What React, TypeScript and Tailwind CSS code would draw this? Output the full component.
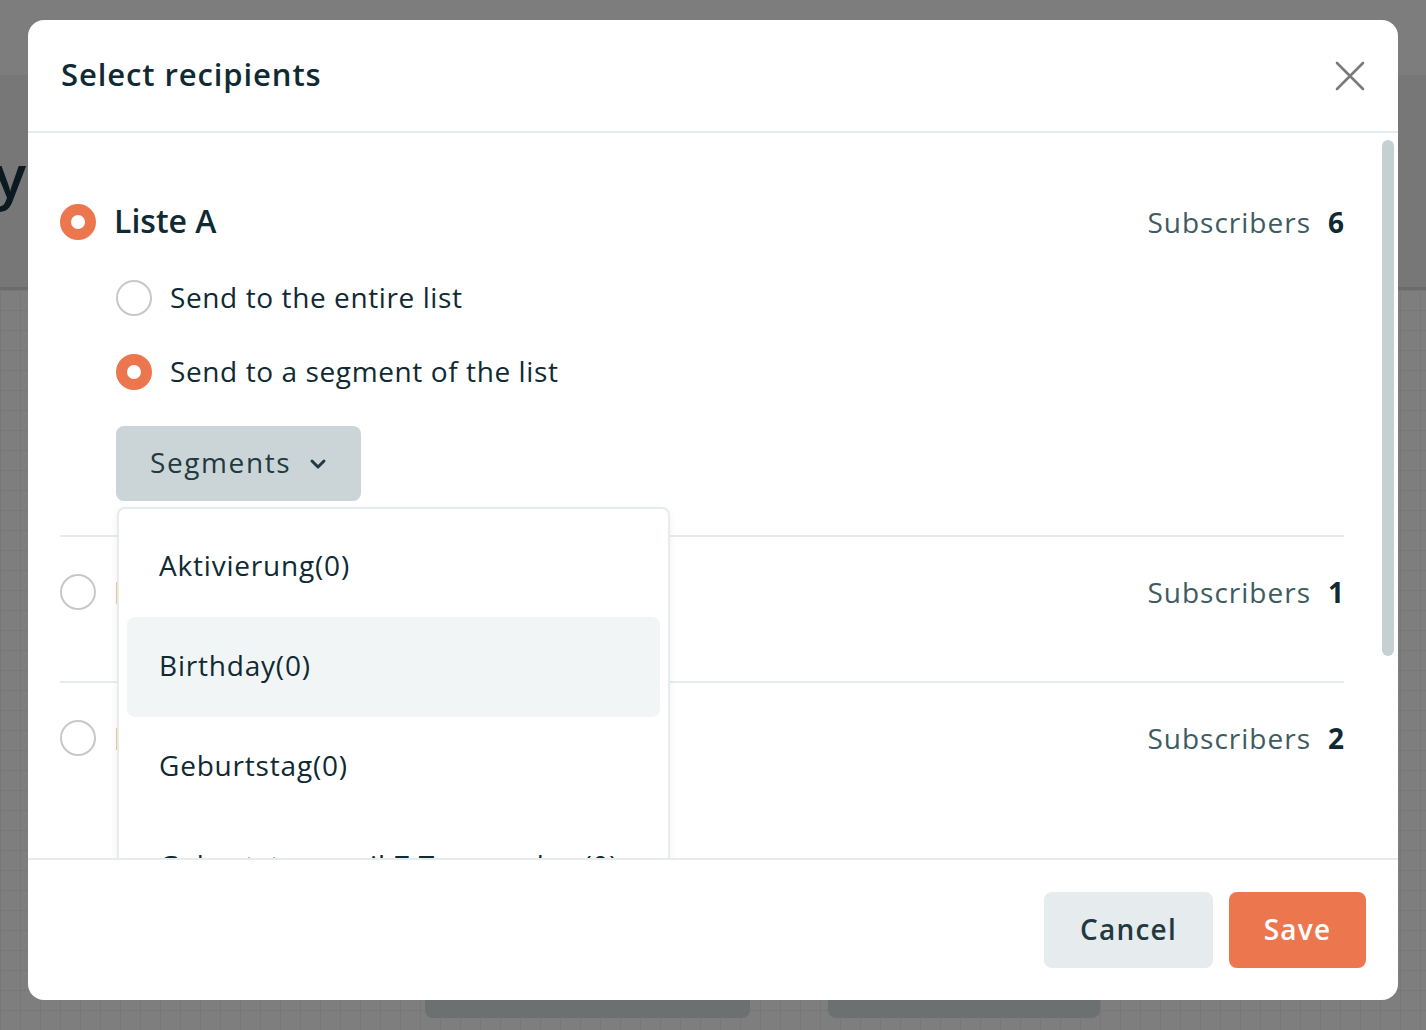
import React from "react";

const font = { fontFamily: '"Open Sans", "Noto Sans", Arial, sans-serif' };

function Radio({ checked }: { checked: boolean }) {
  return checked ? (
    <div className="w-[36px] h-[36px] rounded-full border-[11px] border-[#ec774f] bg-white shrink-0" />
  ) : (
    <div className="w-[36px] h-[36px] rounded-full border-2 border-[#c8c8c8] bg-white shrink-0" />
  );
}

function Subs({ n }: { n: number }) {
  return (
    <div className="flex items-center gap-[17px] text-[28px] leading-none">
      <span className="text-[#3e5b61] tracking-[1px]">Subscribers</span>
      <span className="font-bold text-[#0f2a33]">{n}</span>
    </div>
  );
}

export default function App() {
  const segments = ["Aktivierung(0)", "Birthday(0)", "Geburtstag(0)", "Geburtstagsmail 7 Tage vorher(0)"];
  return (
    <div className="relative w-[1426px] h-[1030px] overflow-hidden bg-[#808080]" style={font}>
      {/* background page (dimmed) */}
      <div className="absolute inset-0 flex flex-col">
        <div className="h-[75px] bg-[#7d7d7d]" />
        <div className="h-[215px] bg-[#777777] border-b-[3px] border-[#6b6b6b] flex items-center">
          <div className="w-[26px] overflow-hidden flex justify-end -mt-[12px]">
            <span className="text-[60px] font-semibold text-[#0a1a20] whitespace-nowrap">Summary</span>
          </div>
        </div>
        <div className="flex-1 bg-[#7e7e7e] bg-[linear-gradient(#777_1px,transparent_1px),linear-gradient(90deg,#777_1px,transparent_1px)] bg-[size:20px_20px] flex flex-col">
          <div className="flex-1" />
          <div className="h-[30px] flex gap-[78px] pl-[425px]">
            <div className="w-[325px] h-[18px] bg-[#6c7070] rounded-b-lg" />
            <div className="w-[272px] h-[18px] bg-[#6c7070] rounded-b-lg" />
          </div>
        </div>
      </div>

      {/* modal overlay */}
      <div className="absolute inset-0 flex items-start justify-center pt-[20px]">
        <div className="w-[1370px] h-[980px] bg-white rounded-[16px] flex flex-col overflow-hidden">
          {/* header */}
          <div className="h-[113px] shrink-0 flex items-center justify-between pl-[33px] pr-[32px] border-b-2 border-[#e6ecee]">
            <h2 className="text-[31px] font-semibold text-[#0f2a33] tracking-[0.9px] -mt-[3px]">Select recipients</h2>
            <svg width="30" height="30" viewBox="0 0 30 30" className="mr-[1px]">
              <path d="M2 2 L28 28 M28 2 L2 28" stroke="#7a7a7a" strokeWidth="2.6" strokeLinecap="round" />
            </svg>
          </div>

          {/* body */}
          <div className="relative flex-1 overflow-hidden">
            <div className="pl-[32px] pr-[54px] pt-[32px]">
              {/* item 1 */}
              <div className="pt-[39px] pb-[34px]">
                <div className="flex items-center justify-between h-[36px]">
                  <div className="flex items-center gap-[18px]">
                    <Radio checked />
                    <span className="text-[32px] font-semibold text-[#0f2a33] -mt-[2px]">Liste A</span>
                  </div>
                  <Subs n={6} />
                </div>
                <div className="pl-[56px]">
                  <div className="mt-[40px] flex items-center gap-[18px] h-[36px]">
                    <Radio checked={false} />
                    <span className="text-[28px] text-[#0f2a33] tracking-[0.6px] -mt-[2px]">Send to the entire list</span>
                  </div>
                  <div className="mt-[38px] flex items-center gap-[18px] h-[36px]">
                    <Radio checked />
                    <span className="text-[28px] text-[#0f2a33] tracking-[0.6px] -mt-[2px]">Send to a segment of the list</span>
                  </div>
                  <div className="mt-[36px] w-[245px] flex items-center justify-between h-[75px] px-[34px] rounded-lg bg-[#cbd5d8]">
                    <span className="text-[28px] text-[#1f3a40] tracking-[1.6px] -mt-[3px]">Segments</span>
                    <svg width="18" height="12" viewBox="0 0 18 12">
                      <path d="M3 3 L9 9 L15 3" stroke="#1f3a40" strokeWidth="3" fill="none" strokeLinecap="round" strokeLinejoin="round" />
                    </svg>
                  </div>
                </div>
              </div>
              <div className="h-[2px] bg-[#e6ecee]" />
              {/* item 2 */}
              <div className="pt-[37px] pb-[71px]">
                <div className="flex items-center justify-between h-[36px]">
                  <div className="flex items-center gap-[18px]">
                    <Radio checked={false} />
                    <span className="text-[30px] font-semibold text-[#0f2a33]">Liste B</span>
                  </div>
                  <Subs n={1} />
                </div>
              </div>
              <div className="h-[2px] bg-[#e6ecee]" />
              {/* item 3 */}
              <div className="pt-[37px] pb-[71px]">
                <div className="flex items-center justify-between h-[36px]">
                  <div className="flex items-center gap-[18px]">
                    <Radio checked={false} />
                    <span className="text-[30px] font-semibold text-[#0f2a33]">Liste C</span>
                  </div>
                  <Subs n={2} />
                </div>
              </div>
            </div>

            {/* dropdown menu */}
            <div className="absolute left-[89px] top-[374px] w-[553px] bg-white border-2 border-[#e6ebed] rounded-lg shadow-[0_2px_8px_rgba(0,0,0,0.06)] p-[8px]">
              {segments.map((s, i) => (
                <div
                  key={s}
                  className={`h-[100px] flex items-center px-[32px] pb-[5px] rounded-lg text-[28px] text-[#0f2a33] tracking-[0.8px] whitespace-nowrap ${i === 1 ? "bg-[#f2f5f6]" : ""}`}
                >
                  {s}
                </div>
              ))}
            </div>

            {/* scrollbar */}
            <div className="absolute right-[4px] top-[7px] w-[12px] h-[516px] rounded-full bg-[#c5d0d3]" />
          </div>

          {/* footer */}
          <div className="h-[142px] shrink-0 border-t-2 border-[#e6ecee] flex items-center justify-end gap-[16px] pr-[32px]">
            <button className="w-[169px] h-[76px] pb-[3px] rounded-lg bg-[#e6ecee] text-[28px] font-semibold text-[#1f3a40] tracking-[1.2px]">Cancel</button>
            <button className="w-[137px] h-[76px] pb-[3px] rounded-lg bg-[#ec774f] text-[28px] font-semibold text-white tracking-[1.2px]">Save</button>
          </div>
        </div>
      </div>
    </div>
  );
}
